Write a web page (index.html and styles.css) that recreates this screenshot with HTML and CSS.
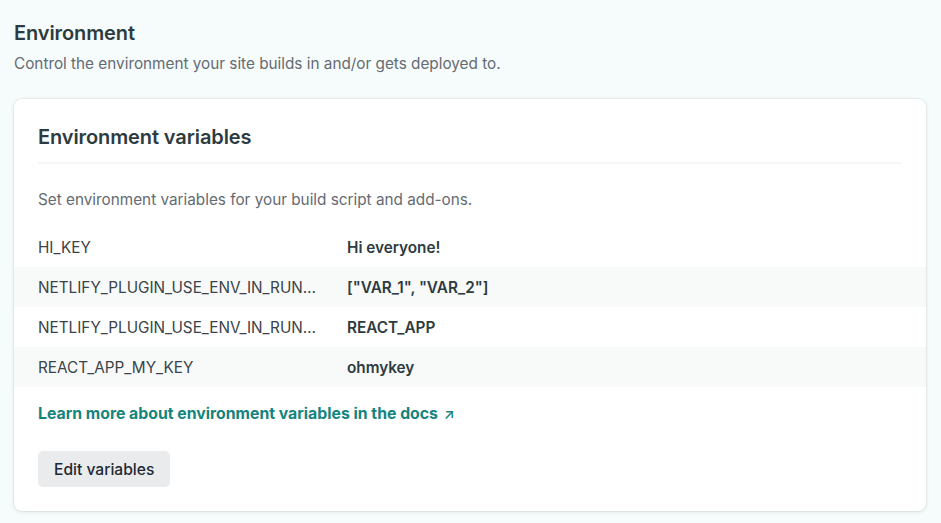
FILE: index.html
```html
<!DOCTYPE html>
<html lang="en">
<head>
<meta charset="utf-8">
<title>Environment</title>
<link rel="stylesheet" href="styles.css">
</head>
<body>
<main class="page">
  <header class="section-head">
    <h1 class="section-title">Environment</h1>
    <p class="section-desc">Control the environment your site builds in and/or gets deployed to.</p>
  </header>
  <section class="card">
    <div class="card-head">
      <h2 class="card-title">Environment variables</h2>
    </div>
    <p class="card-desc">Set environment variables for your build script and add-ons.</p>
    <dl class="vars">
      <div class="var-row"><dt class="var-key">HI_KEY</dt><dd class="var-val">Hi everyone!</dd></div>
      <div class="var-row striped"><dt class="var-key">NETLIFY_PLUGIN_USE_ENV_IN_RUN…</dt><dd class="var-val">["VAR_1", "VAR_2"]</dd></div>
      <div class="var-row"><dt class="var-key">NETLIFY_PLUGIN_USE_ENV_IN_RUN…</dt><dd class="var-val">REACT_APP</dd></div>
      <div class="var-row striped"><dt class="var-key">REACT_APP_MY_KEY</dt><dd class="var-val">ohmykey</dd></div>
    </dl>
    <a class="docs-link" href="#">Learn more about environment variables in the docs <span class="arrow">↗</span></a>
    <div class="actions">
      <button class="btn" type="button">Edit variables</button>
    </div>
  </section>
</main>
</body>
</html>
```
FILE: styles.css
```css
* { box-sizing: border-box; }
html, body { margin: 0; padding: 0; }
body {
  background: #f6fbfb;
  font-family: Inter, "Noto Sans", "Liberation Sans", sans-serif;
  color: #2d3b41;
  width: 941px;
  height: 523px;
  overflow: hidden;
}
.page {
  padding: 21px 15px 0 14px;
}
.section-head { margin-bottom: 23px; }
.section-title {
  margin: 0;
  font-size: 20px;
  line-height: 24px;
  font-weight: 600;
  color: #2d3b41;
  letter-spacing: -0.1px;
}
.section-desc {
  margin: 7px 0 0;
  font-size: 15.3px;
  line-height: 24px;
  color: #646b73;
}
.card {
  background: #fff;
  border-radius: 8px;
  box-shadow: 0 0 0 1px rgba(14, 30, 37, 0.04), 0 1px 4px rgba(14, 30, 37, 0.1);
  padding: 0 0 24px;
}
.card-head {
  margin: 0 24px;
  padding: 26px 0 13px;
  border-bottom: 2px solid #f5f6f7;
}
.card-title {
  margin: 0;
  font-size: 20px;
  line-height: 24px;
  font-weight: 600;
  color: #2d3b41;
  letter-spacing: -0.1px;
}
.card-desc {
  margin: 0;
  padding: 24px 24px 15px;
  font-size: 15.3px;
  line-height: 24px;
  color: #646b73;
}
.vars { margin: 0; }
.var-row {
  display: flex;
  align-items: center;
  height: 40px;
  padding: 0 24px;
  font-size: 15.3px;
}
.var-row.striped { background: #f8fafa; }
.var-key {
  width: 309px;
  flex: none;
  padding-right: 20px;
  white-space: nowrap;
  overflow: hidden;
  text-overflow: ellipsis;
  color: #3b4349;
}
.var-val {
  margin: 0;
  font-weight: 600;
  color: #2d3b41;
}
.docs-link {
  display: inline-block;
  margin: 16px 24px 0;
  font-size: 15.8px;
  line-height: 22px;
  font-weight: 700;
  color: #15847d;
  text-decoration: none;
}
.arrow { font-weight: 600; font-size: 14px; margin-left: 2px; }
.actions { padding: 26px 24px 0; }
.btn {
  font-family: inherit;
  font-size: 15.6px;
  font-weight: 500;
  color: #1f2933;
  background: #e9ebed;
  border: 0;
  border-radius: 5px;
  height: 36px;
  padding: 0 16px;
}
```
